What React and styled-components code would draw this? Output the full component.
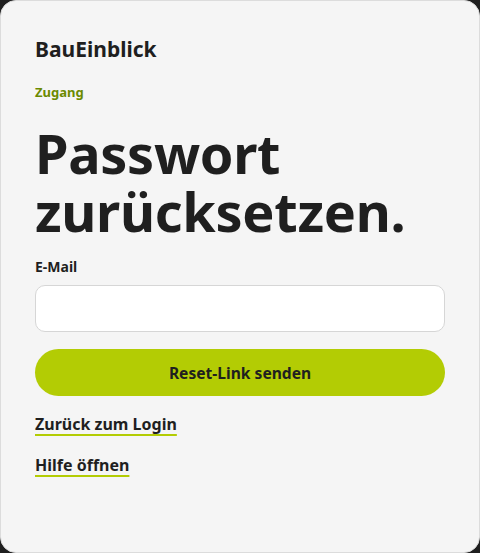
import styled, { createGlobalStyle } from 'styled-components';

const GlobalStyle = createGlobalStyle`
  html, body {
    margin: 0;
    padding: 0;
    background: #1f1f1f;
  }
  body {
    font-family: "Noto Sans", "Open Sans", sans-serif;
    color: #1f1f1f;
  }
  * { box-sizing: border-box; }
`;

const Card = styled.main`
  width: 480px;
  height: 553px;
  background: #f5f5f5;
  border: 1px solid #dcdcdc;
  border-radius: 16px;
  padding: 34px 34px 0 34px;
  display: flex;
  flex-direction: column;
`;

const Brand = styled.div`
  font-size: 21px;
  font-weight: 700;
  line-height: 28px;
  color: #1f1f1f;
`;

const Eyebrow = styled.div`
  margin-top: 20px;
  font-size: 13px;
  font-weight: 700;
  line-height: 18px;
  color: #6b8a00;
`;

const Title = styled.h1`
  margin: 23px 0 0 0;
  font-size: 54px;
  font-weight: 700;
  line-height: 58px;
  letter-spacing: -0.3px;
  color: #1f1f1f;
`;

const Form = styled.form`
  margin-top: 18px;
  display: flex;
  flex-direction: column;
`;

const Label = styled.label`
  font-size: 14px;
  font-weight: 700;
  line-height: 18px;
  color: #1f1f1f;
`;

const Input = styled.input`
  margin-top: 9px;
  height: 47px;
  width: 100%;
  border: 1px solid #d6d6d6;
  border-radius: 10px;
  background: #fff;
  padding: 0 14px;
  font: inherit;
  font-size: 15px;
  outline: none;
`;

const Submit = styled.button`
  margin-top: 17px;
  height: 47px;
  width: 100%;
  border: none;
  border-radius: 24px;
  background: #b3cc04;
  color: #1f1f1f;
  font-family: inherit;
  font-size: 15.6px;
  font-weight: 700;
  cursor: pointer;
`;

const Links = styled.nav`
  margin-top: 17px;
  display: flex;
  flex-direction: column;
  align-items: flex-start;
  gap: 18px;
`;

const TextLink = styled.a`
  font-size: 16px;
  font-weight: 700;
  line-height: 23px;
  color: #1f1f1f;
  text-decoration: underline;
  text-decoration-color: #b3cc04;
  text-decoration-thickness: 2px;
  text-underline-offset: 4px;
  cursor: pointer;
`;

export default function App() {
  return (
    <>
      <GlobalStyle />
      <Card>
        <Brand>BauEinblick</Brand>
        <Eyebrow>Zugang</Eyebrow>
        <Title>
          Passwort
          <br />
          zurücksetzen.
        </Title>
        <Form onSubmit={(e) => e.preventDefault()}>
          <Label htmlFor="email">E-Mail</Label>
          <Input id="email" type="email" />
          <Submit type="submit">Reset-Link senden</Submit>
        </Form>
        <Links>
          <TextLink href="#">Zurück zum Login</TextLink>
          <TextLink href="#">Hilfe öffnen</TextLink>
        </Links>
      </Card>
    </>
  );
}
